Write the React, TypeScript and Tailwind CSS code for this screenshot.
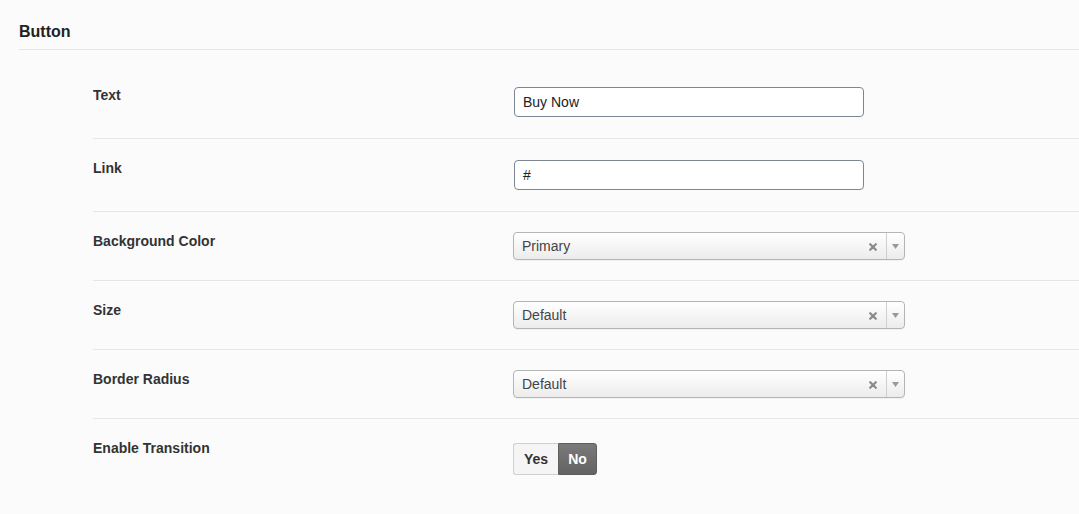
import React from "react";

const font = { fontFamily: '"Liberation Sans", Arial, sans-serif' };

function Label({ children }: { children: React.ReactNode }) {
  return (
    <div className="w-[420px] shrink-0 text-[14px] leading-[18px] font-bold text-[#333]">
      {children}
    </div>
  );
}

function TextInput({ value }: { value: string }) {
  return (
    <div className="ml-px w-[350px] h-[30px] bg-white border border-[#7d8794] rounded-[4px] flex items-center pl-[8px] pt-px text-[14px] text-[#222]">
      {value}
    </div>
  );
}

function Select({ value }: { value: string }) {
  return (
    <div className="w-[392px] h-[28px] border border-[#b4b4b4] rounded-[4px] bg-gradient-to-b from-white to-[#ececec] flex items-center text-[14px] text-[#444] shadow-[0_1px_0_rgba(0,0,0,0.04)]">
      <div className="flex-1 pl-[8px]">{value}</div>
      <svg width="8" height="8" viewBox="0 0 8 8" className="mr-[9px] mt-[2px]">
        <path d="M1.2 1.2 L6.8 6.8 M6.8 1.2 L1.2 6.8" stroke="#8a8a8a" strokeWidth="2.2" strokeLinecap="round" />
      </svg>
      <div className="w-[18px] h-full border-l border-[#cfcfcf] flex items-center justify-center">
        <svg width="7" height="5" viewBox="0 0 7 5">
          <path d="M0 0 L7 0 L3.5 5 Z" fill="#999" />
        </svg>
      </div>
    </div>
  );
}

function Row({ label, children, first, last }: { label: string; children: React.ReactNode; first?: boolean; last?: boolean }) {
  return (
    <div className={`flex items-start ${first ? "pt-[36px]" : "pt-[20px]"} pb-[20px] ${last ? "" : "border-b border-[#e6e6e6]"}`}>
      <Label>{label}</Label>
      <div>{children}</div>
    </div>
  );
}

export default function App() {
  return (
    <div style={font} className="w-[1079px] h-[514px] bg-[#fbfbfb] overflow-hidden">
      <div className="pl-[19px]">
        <div className="pt-[22px] pb-[7px] leading-[20px] text-[16px] font-bold text-[#222] border-b border-[#e6e6e6]">
          Button
        </div>
        <div className="pl-[74px]">
          <Row label="Text" first>
            <div className="py-px">
              <TextInput value="Buy Now" />
            </div>
          </Row>
          <Row label="Link">
            <div className="py-px">
              <TextInput value="#" />
            </div>
          </Row>
          <Row label="Background Color">
            <Select value="Primary" />
          </Row>
          <Row label="Size">
            <Select value="Default" />
          </Row>
          <Row label="Border Radius">
            <Select value="Default" />
          </Row>
          <Row label="Enable Transition" last>
            <div className="mt-[4px] flex h-[32px] text-[14px] font-bold">
              <div className="w-[45px] flex items-center justify-center bg-[#f5f5f5] border border-[#cfcfcf] border-r-0 rounded-l-[3px] text-[#333]">
                Yes
              </div>
              <div className="w-[39px] flex items-center justify-center bg-gradient-to-b from-[#7a7a7a] to-[#636363] border border-[#5e5e5e] rounded-r-[3px] text-white">
                No
              </div>
            </div>
          </Row>
        </div>
      </div>
    </div>
  );
}
